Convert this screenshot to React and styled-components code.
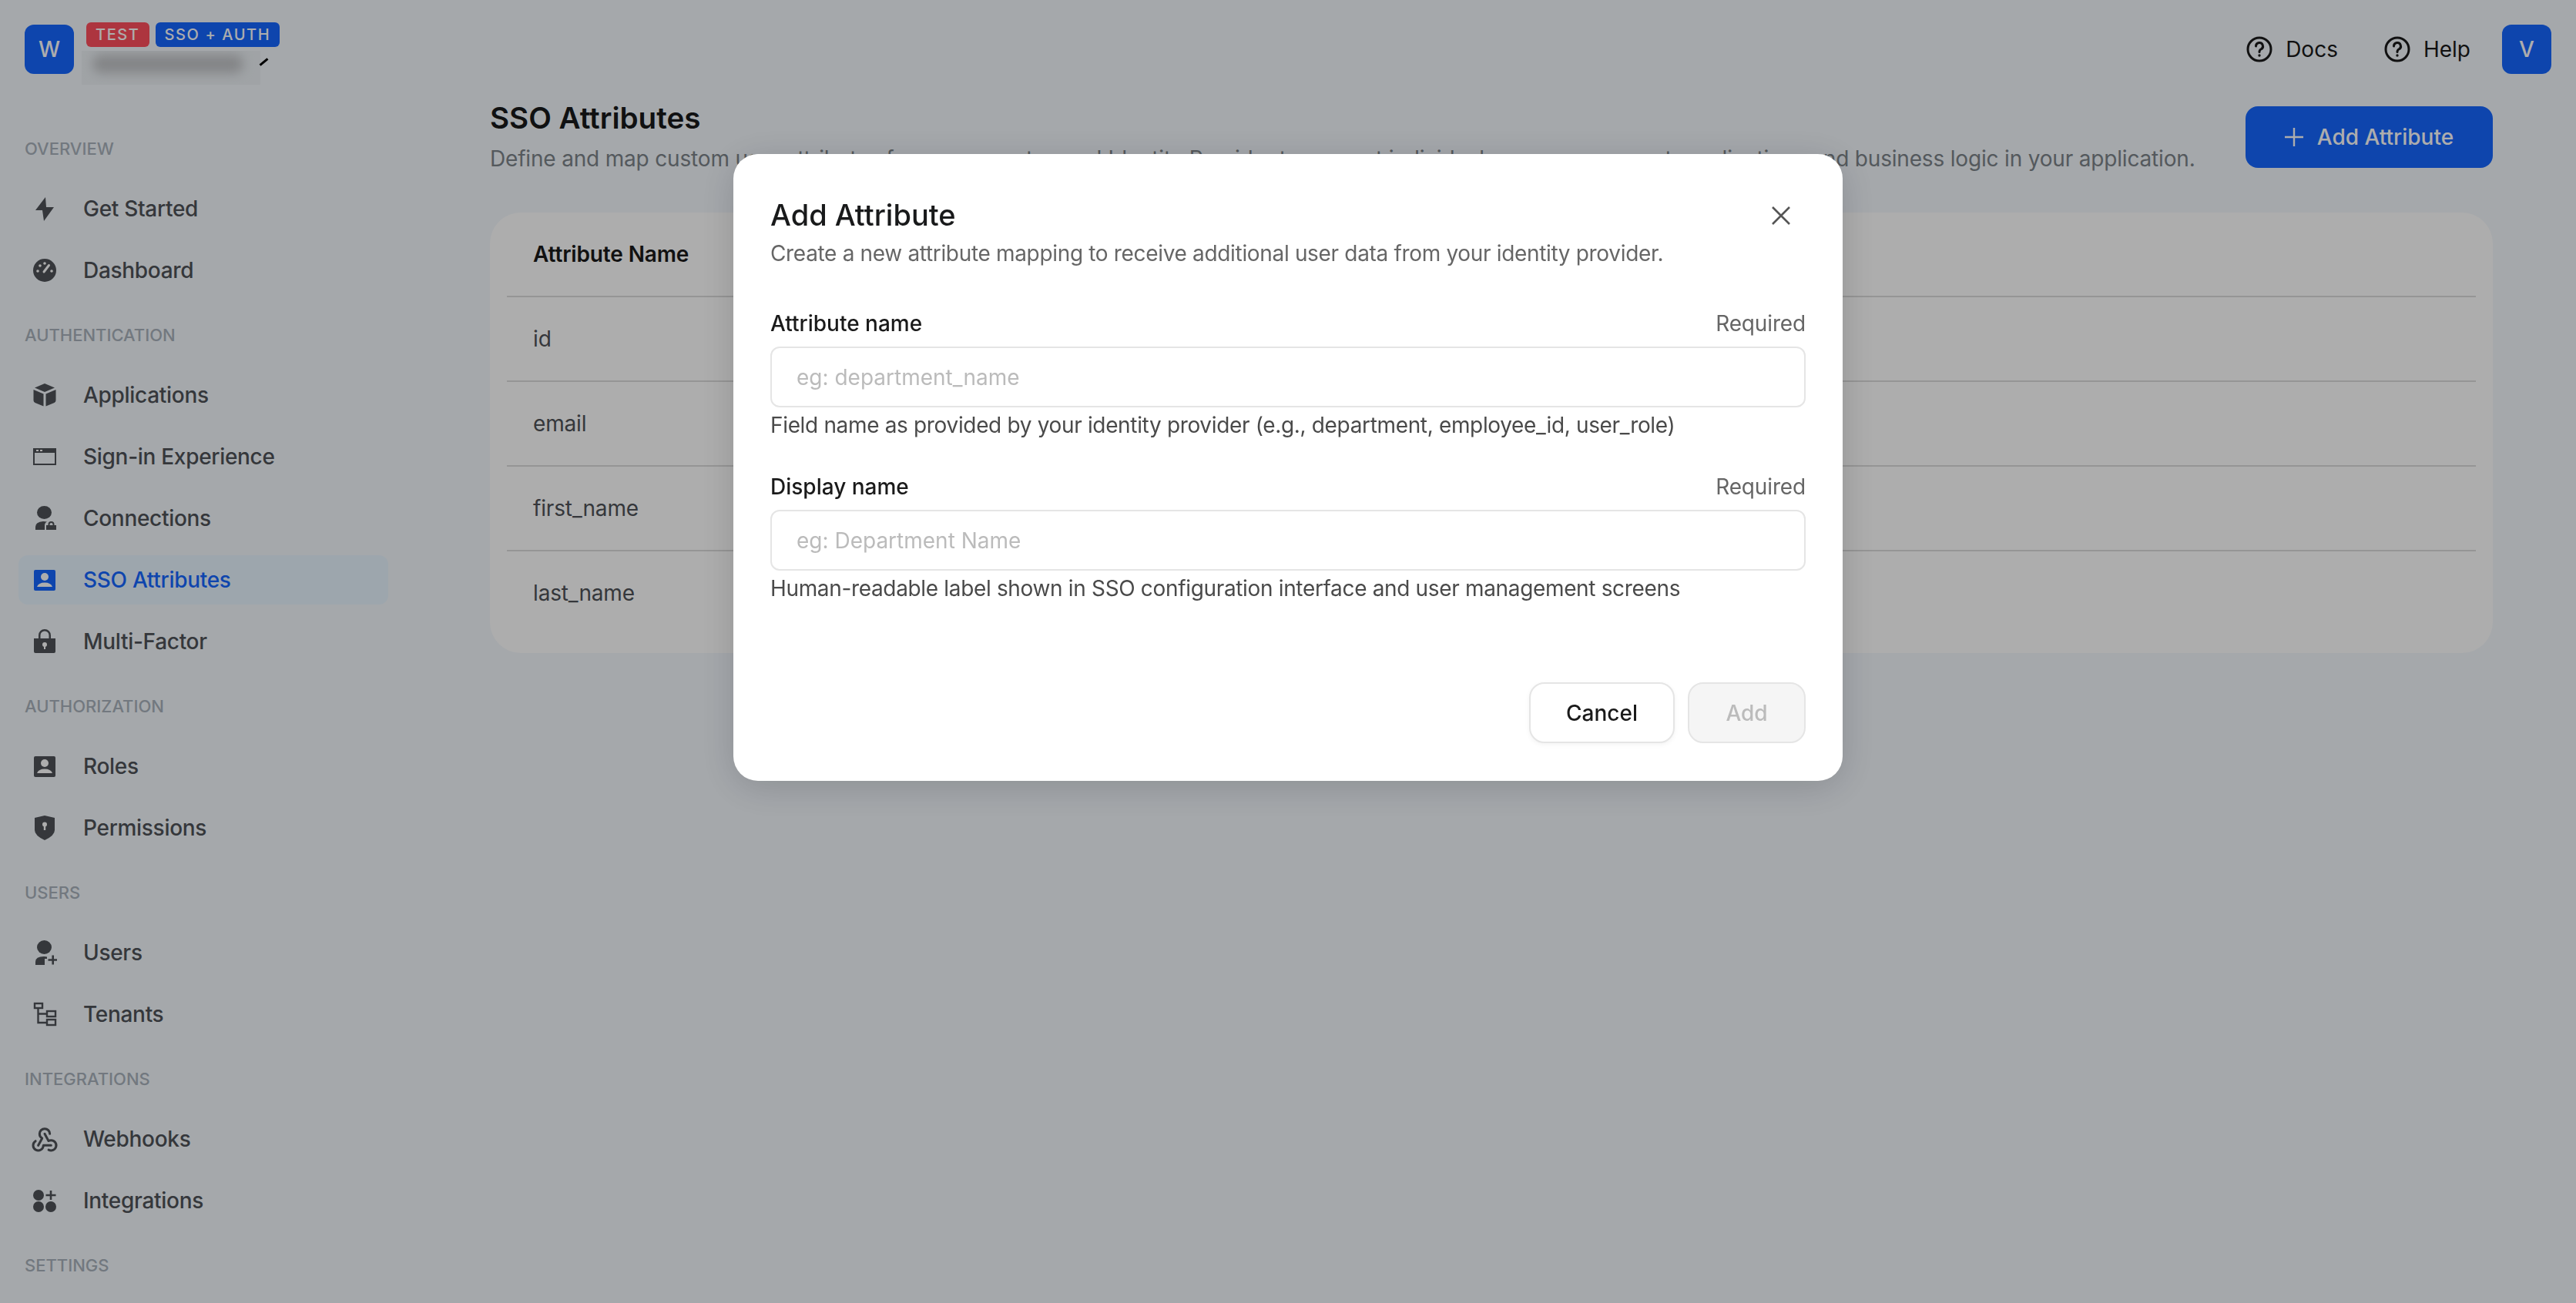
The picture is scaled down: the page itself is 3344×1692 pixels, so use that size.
import React from 'react';
import styled, { createGlobalStyle } from 'styled-components';
import { TbWebhook } from 'react-icons/tb';

const GlobalStyle = createGlobalStyle`
  html, body {
    margin: 0;
    padding: 0;
    background: #f3f8fd;
    font-family: Inter, "Liberation Sans", sans-serif;
  }
  * { box-sizing: border-box; }
`;

const Page = styled.div`
  width: 3344px;
  height: 1692px;
  overflow: hidden;
  background: #f3f8fd;
  display: flex;
  flex-direction: column;
`;

const Header = styled.header`
  height: 128px;
  flex-shrink: 0;
  display: flex;
  align-items: flex-start;
  justify-content: space-between;
  padding: 32px 32px 0;
`;

const Brand = styled.div`
  display: flex;
  gap: 16px;
`;

const Square = styled.div`
  width: 64px;
  height: 64px;
  border-radius: 12px;
  background: #1666ff;
  color: #fff;
  font-size: 28px;
  font-weight: 500;
  display: flex;
  align-items: center;
  justify-content: center;
`;

const BrandInfo = styled.div`
  display: flex;
  flex-direction: column;
  margin-top: -3px;
`;

const BadgeRow = styled.div`
  display: flex;
  gap: 8px;
`;

const Badge = styled.span`
  height: 32px;
  padding: 0 12px;
  border-radius: 6px;
  background: ${p => (p.$red ? '#ff4f5d' : '#1666ff')};
  color: #fff;
  font-size: 20px;
  font-weight: 500;
  letter-spacing: 1.6px;
  line-height: 32px;
`;

const NameRow = styled.div`
  display: flex;
  align-items: flex-start;
  margin: 5px 0 0 -6px;
`;

const BlurBox = styled.div`
  width: 232px;
  height: 44px;
  overflow: hidden;
  background: #ecf1f5;
  display: flex;
  align-items: center;
  padding: 0 22px 0 14px;
`;

const BlurInk = styled.div`
  flex: 1;
  height: 24px;
  margin-top: -10px;
  border-radius: 12px;
  background: #c2c4c7;
  filter: blur(7px);
`;

const PenMark = styled.div`
  width: 3px;
  height: 13px;
  margin: 8px 0 0 3px;
  background: #000;
  transform: rotate(50deg);
`;

const TopActions = styled.div`
  display: flex;
  align-items: center;
`;

const TopLink = styled.a`
  display: flex;
  align-items: center;
  gap: 17px;
  margin-right: ${p => (p.$last ? '41px' : '60px')};
  color: #1a1a1a;
  font-size: 28px;
  font-weight: 400;
`;

const Shell = styled.div`
  flex: 1;
  display: flex;
  min-height: 0;
`;

const Sidebar = styled.aside`
  width: 540px;
  flex-shrink: 0;
  padding: 53px 0 0 24px;
  display: flex;
  flex-direction: column;
  gap: 40px;
`;

const NavSection = styled.section`
  display: flex;
  flex-direction: column;
  gap: 16px;
`;

const SectionLabel = styled.div`
  height: 24px;
  margin: 0 0 18px 8px;
  color: #a9b2bb;
  font-size: 22px;
  font-weight: 500;
  line-height: 24px;
`;

const NavItem = styled.a`
  width: 480px;
  height: 64px;
  display: flex;
  align-items: center;
  gap: 34px;
  padding-left: 18px;
  border-radius: 12px;
  background: ${p => (p.$active ? '#e8f5ff' : 'transparent')};
  color: ${p => (p.$active ? '#1666ff' : '#4e5257')};
  font-size: 28px;
  font-weight: 500;
  letter-spacing: -0.3px;
`;

const IconBox = styled.span`
  width: 32px;
  height: 32px;
  display: flex;
  flex-shrink: 0;
  align-items: center;
  justify-content: center;
  svg { flex-shrink: 0; }
`;

const Main = styled.main`
  flex: 1;
  min-width: 0;
  padding: 0 108px 0 96px;
`;

const TitleRow = styled.div`
  display: flex;
  align-items: flex-start;
  justify-content: space-between;
`;

const PageTitle = styled.h1`
  margin: 0;
  color: #191a1b;
  font-size: 38.6px;
  font-weight: 600;
  line-height: 50px;
`;

const PageDesc = styled.p`
  margin: 8px 0 0;
  color: #7d8489;
  font-size: 28px;
  line-height: 40px;
  letter-spacing: -0.18px;
  white-space: nowrap;
`;

const AddButton = styled.button`
  width: 321px;
  height: 80px;
  flex-shrink: 0;
  margin-top: 10px;
  border: 0;
  border-radius: 16px;
  background: #1666ff;
  color: #fff;
  font: 500 28px Inter, sans-serif;
  display: flex;
  align-items: center;
  justify-content: center;
  gap: 18px;
`;

const Card = styled.div`
  height: 572px;
  margin-top: 50px;
  padding: 0 22px;
  border-radius: 40px;
  background: #fff;
  display: flex;
  flex-direction: column;
`;

const Row = styled.div`
  height: ${p => (p.$head ? '108px' : '110px')};
  flex-shrink: 0;
  display: flex;
  align-items: center;
  padding-left: 34px;
  border-top: ${p => (p.$head ? '0' : '2px solid #dcdcdc')};
  color: ${p => (p.$head ? '#1a1a1a' : '#4e5257')};
  font-size: 28px;
  font-weight: ${p => (p.$head ? 600 : 400)};
  letter-spacing: -0.15px;
`;

const Overlay = styled.div`
  position: fixed;
  inset: 0;
  background: rgba(0, 0, 0, 0.32);
  display: flex;
  justify-content: center;
  padding-top: 200px;
`;

const Modal = styled.div`
  position: relative;
  width: 1440px;
  height: 814px;
  padding: 48px 48px 49px;
  border-radius: 32px;
  background: #fff;
  box-shadow: 0 8px 48px rgba(0, 0, 0, 0.16);
  display: flex;
  flex-direction: column;
`;

const ModalTitle = styled.h2`
  margin: 0;
  color: #191a1b;
  font-size: 38px;
  font-weight: 500;
  line-height: 62px;
`;

const ModalDesc = styled.p`
  margin: 0;
  color: #666;
  font-size: 28px;
  line-height: 38px;
  letter-spacing: -0.33px;
`;

const CloseButton = styled.button`
  position: absolute;
  top: 62px;
  right: 62px;
  width: 36px;
  height: 36px;
  padding: 0;
  border: 0;
  background: none;
  color: #555;
  display: flex;
  align-items: center;
  justify-content: center;
`;

const Field = styled.div`
  margin-top: ${p => (p.$first ? '54px' : '42px')};
  display: flex;
  flex-direction: column;
`;

const LabelRow = styled.div`
  height: 36px;
  display: flex;
  align-items: center;
  justify-content: space-between;
  margin-bottom: 12px;
`;

const FieldLabel = styled.label`
  color: #1a1a1a;
  font-size: 28px;
  font-weight: 500;
`;

const Required = styled.span`
  color: #666;
  font-size: 28px;
  letter-spacing: -0.15px;
`;

const Input = styled.input`
  width: 100%;
  height: 79px;
  padding: 0 32px;
  border: 2px solid #e5e5e5;
  border-radius: 12px;
  font: 400 28px Inter, sans-serif;
  outline: none;
  &::placeholder { color: #bbb; opacity: 1; }
`;

const Helper = styled.div`
  height: 40px;
  margin-top: 3px;
  color: #4a4a4a;
  font-size: 28px;
  line-height: 40px;
  letter-spacing: -0.34px;
`;

const Footer = styled.div`
  margin-top: auto;
  display: flex;
  justify-content: flex-end;
  gap: 17px;
`;

const FooterButton = styled.button`
  width: ${p => (p.$disabled ? '153px' : '189px')};
  height: 79px;
  border: 2px solid #e5e5e5;
  border-radius: 20px;
  background: ${p => (p.$disabled ? '#f5f5f5' : '#fff')};
  color: ${p => (p.$disabled ? '#bbb' : '#1a1a1a')};
  font: 500 28px Inter, sans-serif;
  box-shadow: ${p => (p.$disabled ? 'none' : '0 2px 6px rgba(0,0,0,0.05)')};
`;

const Svg = ({ children }) => (
  <svg width="32" height="32" viewBox="0 0 32 32" fill="currentColor">{children}</svg>
);

const icons = {
  bolt: <Svg><path d="M17 1 L4 18 H13 L15 32 L28 14 H18 Z" /></Svg>,
  gauge: (
    <Svg>
      <circle cx="16" cy="16" r="15" />
      <circle cx="7" cy="17" r="1.8" fill="#fff" />
      <circle cx="10" cy="10" r="1.8" fill="#fff" />
      <circle cx="16" cy="7" r="1.8" fill="#fff" />
      <circle cx="25" cy="17" r="1.8" fill="#fff" />
      <path d="M15 18 L21.5 9.5" stroke="#fff" strokeWidth="3" strokeLinecap="round" />
    </Svg>
  ),
  box: (
    <Svg>
      <path d="M16 1 L29 6.5 L16 12 L3 6.5 Z" />
      <path d="M1.5 9 L14.5 14.5 V30.5 L3.5 26 Q1.5 25 1.5 23 Z" />
      <path d="M30.5 9 L17.5 14.5 V30.5 L28.5 26 Q30.5 25 30.5 23 Z" />
    </Svg>
  ),
  browser: (
    <Svg>
      <path fillRule="evenodd" d="M1 5 H31 V27 H1 Z M3 11 V25 H29 V11 Z" />
      <rect x="5" y="7" width="3" height="2" fill="#fff" />
      <rect x="10" y="7" width="3" height="2" fill="#fff" />
    </Svg>
  ),
  userLock: (
    <Svg>
      <ellipse cx="15.5" cy="8.5" rx="9.5" ry="8.5" />
      <path d="M4 31 V27 Q4 21 14 20 Q17 20 19 20.5 Q16 22 16 25 V31 Z" />
      <path fillRule="evenodd" d="M18 25 H20.5 V24 A4 4 0 0 1 28.5 24 V25 H31 V31 H18 Z M22.5 25 H26.5 V24 A2 2 0 0 0 22.5 24 Z" />
    </Svg>
  ),
  contact: (
    <Svg>
      <rect x="2" y="3" width="28" height="27" rx="2" />
      <circle cx="16" cy="12" r="5" fill="#fff" />
      <path d="M6 25 Q8 19.5 16 19.5 Q24 19.5 26 25 Z" fill="#fff" />
    </Svg>
  ),
  lock: (
    <Svg>
      <path fillRule="evenodd" d="M2 13 H8 V9 A8 8 0 0 1 24 9 V13 H30 V30 Q30 32 28 32 H4 Q2 32 2 30 V13 Z M10.5 13 H21.5 V9 A5.5 5.5 0 0 0 10.5 9 Z" transform="translate(0 -1)" />
      <circle cx="16" cy="20" r="3" fill="#fff" />
      <rect x="15" y="20" width="2" height="6" fill="#fff" />
    </Svg>
  ),
  shield: (
    <Svg>
      <path d="M16 0 L29 3 V19 Q29 26 16 32 Q3 26 3 19 V3 Z" />
      <circle cx="16" cy="11.5" r="3" fill="#fff" />
      <rect x="14.8" y="12" width="2.4" height="7" fill="#fff" />
    </Svg>
  ),
  userPlus: (
    <Svg>
      <ellipse cx="15.5" cy="9" rx="9.5" ry="9" />
      <path d="M4 32 V28 Q4 21 15 21 Q18 21 19 21.5 V24 H16 V32 Z" />
      <path d="M20.5 25.5 H33 M26.7 19.5 V31.5" stroke="currentColor" strokeWidth="2.6" fill="none" />
    </Svg>
  ),
  tree: (
    <Svg>
      <g fill="none" stroke="currentColor" strokeWidth="2.4">
        <rect x="3" y="2" width="10" height="6" />
        <rect x="19" y="12" width="11" height="7" />
        <rect x="19" y="23" width="11" height="7" />
        <path d="M7.5 8 V27 H19 M7.5 15.5 H19" />
      </g>
    </Svg>
  ),
  webhook: <TbWebhook size={40} strokeWidth={1.8} />,
  apps: (
    <Svg>
      <circle cx="8" cy="9" r="7" />
      <circle cx="8" cy="24" r="7" />
      <circle cx="24" cy="24" r="7" />
      <path d="M17.5 9 H30.5 M24 3 V15" stroke="currentColor" strokeWidth="2.6" fill="none" />
    </Svg>
  ),
};

const sections = [
  { label: 'OVERVIEW', items: [['Get Started', 'bolt'], ['Dashboard', 'gauge']] },
  {
    label: 'AUTHENTICATION',
    items: [
      ['Applications', 'box'],
      ['Sign-in Experience', 'browser'],
      ['Connections', 'userLock'],
      ['SSO Attributes', 'contact', true],
      ['Multi-Factor', 'lock'],
    ],
  },
  { label: 'AUTHORIZATION', items: [['Roles', 'contact'], ['Permissions', 'shield']] },
  { label: 'USERS', items: [['Users', 'userPlus'], ['Tenants', 'tree']] },
  { label: 'INTEGRATIONS', items: [['Webhooks', 'webhook'], ['Integrations', 'apps']] },
  { label: 'SETTINGS', items: [] },
];

const HelpIcon = () => (
  <svg width="34" height="34" viewBox="0 0 34 34" fill="none" stroke="currentColor" strokeWidth="3">
    <circle cx="17" cy="17" r="15" />
    <path d="M12.5 13 A4.5 4.5 0 1 1 19 17 Q17 18 17 20.5" strokeLinecap="round" />
    <circle cx="17" cy="25" r="1" fill="currentColor" strokeWidth="1.4" />
  </svg>
);

const fields = [
  {
    label: 'Attribute name',
    placeholder: 'eg: department_name',
    help: 'Field name as provided by your identity provider (e.g., department, employee_id, user_role)',
  },
  {
    label: 'Display name',
    placeholder: 'eg: Department Name',
    help: 'Human-readable label shown in SSO configuration interface and user management screens',
  },
];

export default function App() {
  return (
    <Page>
      <GlobalStyle />
      <Header>
        <Brand>
          <Square>W</Square>
          <BrandInfo>
            <BadgeRow>
              <Badge $red>TEST</Badge>
              <Badge>SSO + AUTH</Badge>
            </BadgeRow>
            <NameRow>
              <BlurBox><BlurInk /></BlurBox>
              <PenMark />
            </NameRow>
          </BrandInfo>
        </Brand>
        <TopActions>
          <TopLink><HelpIcon />Docs</TopLink>
          <TopLink $last><HelpIcon />Help</TopLink>
          <Square>V</Square>
        </TopActions>
      </Header>
      <Shell>
        <Sidebar>
          {sections.map(section => (
            <NavSection key={section.label}>
              <SectionLabel>{section.label}</SectionLabel>
              {section.items.map(([name, icon, active]) => (
                <NavItem key={name} $active={active}>
                  <IconBox>{icons[icon]}</IconBox>
                  {name}
                </NavItem>
              ))}
            </NavSection>
          ))}
        </Sidebar>
        <Main>
          <TitleRow>
            <div>
              <PageTitle>SSO Attributes</PageTitle>
              <PageDesc>Define and map custom user attributes from your customers' Identity Provider to support individual user management, applications and business logic in your application.</PageDesc>
            </div>
            <AddButton>
              <svg width="24" height="24" viewBox="0 0 24 24" stroke="currentColor" strokeWidth="2.4"><path d="M12 0 V24 M0 12 H24" /></svg>
              Add Attribute
            </AddButton>
          </TitleRow>
          <Card>
            <Row $head>Attribute Name</Row>
            <Row>id</Row>
            <Row>email</Row>
            <Row>first_name</Row>
            <Row>last_name</Row>
          </Card>
        </Main>
      </Shell>
      <Overlay>
        <Modal>
          <ModalTitle>Add Attribute</ModalTitle>
          <ModalDesc>Create a new attribute mapping to receive additional user data from your identity provider.</ModalDesc>
          <CloseButton>
            <svg width="24" height="24" viewBox="0 0 24 24" stroke="currentColor" strokeWidth="2.6"><path d="M1 1 L23 23 M23 1 L1 23" /></svg>
          </CloseButton>
          {fields.map((field, i) => (
            <Field key={field.label} $first={i === 0}>
              <LabelRow>
                <FieldLabel>{field.label}</FieldLabel>
                <Required>Required</Required>
              </LabelRow>
              <Input placeholder={field.placeholder} readOnly />
              <Helper>{field.help}</Helper>
            </Field>
          ))}
          <Footer>
            <FooterButton>Cancel</FooterButton>
            <FooterButton $disabled>Add</FooterButton>
          </Footer>
        </Modal>
      </Overlay>
    </Page>
  );
}
